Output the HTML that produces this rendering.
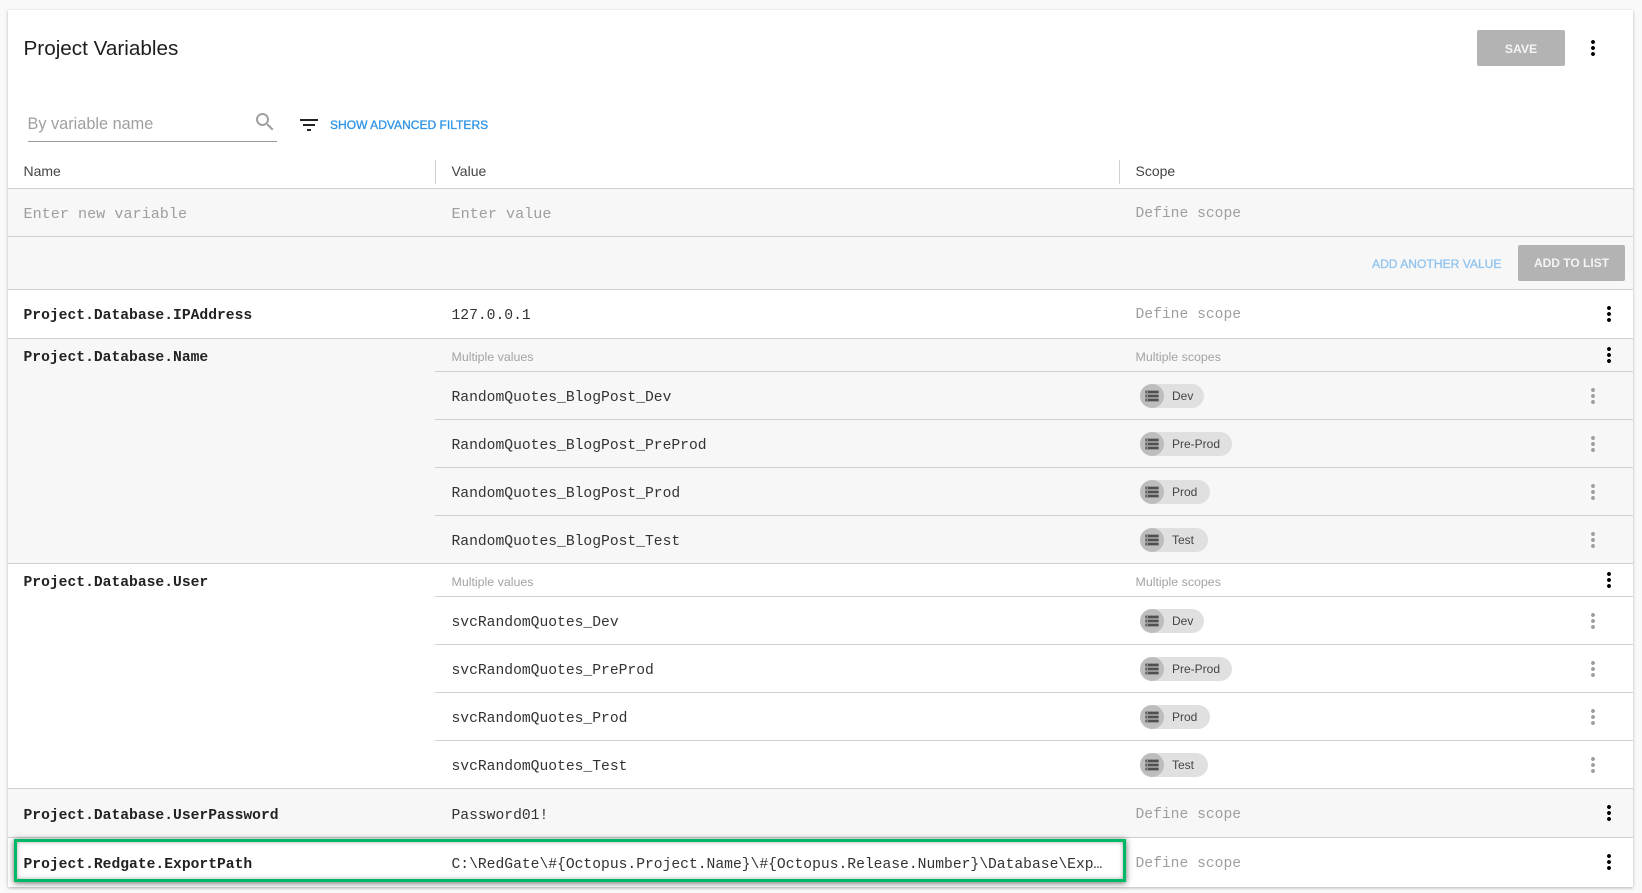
<!DOCTYPE html>
<html><head><meta charset="utf-8"><title>Project Variables</title>
<style>
html,body{margin:0;padding:0;width:1642px;height:893px;overflow:hidden;background:#f9f9f9}
body{position:relative;font-family:"Liberation Sans",sans-serif}
.card{position:absolute;left:8px;top:10px;width:1625px;height:877px;background:#fff;box-shadow:0 1px 3px rgba(0,0,0,.28)}
.a{position:absolute;white-space:nowrap}
.bg{position:absolute;left:8px;width:1625px;background:#f7f7f7}
.h{position:absolute;height:1px;background:#d0d0d0}
.m{position:absolute;white-space:pre;font-family:"Liberation Mono",monospace;font-size:14.67px;line-height:20px;color:#333;margin-top:2px;margin-left:-.5px}
.n{font-weight:bold;left:24px;color:#222}
.v{left:452px}
.p{color:#9e9e9e;font-size:15.15px}
.s{left:1136px;color:#9e9e9e}
.mv{position:absolute;font-size:12.4px;line-height:16px;color:#a3a3a3;white-space:nowrap;margin-left:-.5px}
.chip{position:absolute;left:1140px;height:24px;border-radius:12px;background:#e0e0e0;font-size:12px;line-height:24px;color:#444}
.chip i{position:absolute;left:0;top:0;width:24px;height:24px;border-radius:50%;background:#bdbdbd}
.chip svg{position:absolute;left:4px;top:4px;width:16px;height:16px;fill:#505050}
.chip span{position:absolute;left:32px;top:0;white-space:nowrap}
.d{position:absolute;width:24px;height:24px;fill:#000}
.d.g{fill:#9e9e9e}
</style></head><body>
<div class="card"></div>

<div class="a" style="left:23.5px;top:37px;font-size:20.7px;line-height:24px;color:#1d1d1d">Project Variables</div>
<div class="a" style="left:1477px;top:30px;width:88px;height:36px;background:#b3b3b3;border-radius:2px;color:#f4f4f4;font-size:12.2px;font-weight:bold;line-height:38px;text-align:center">SAVE</div>
<svg class="d" style="left:1581px;top:36px" viewBox="0 0 24 24"><path d="M12 8c1.1 0 2-.9 2-2s-.9-2-2-2-2 .9-2 2 .9 2 2 2zm0 2c-1.100 0-2 .9-2 2s.9 2 2 2 2-.9 2-2-.9-2-2-2zm0 6c-1.100 0-2 .9-2 2s.9 2 2 2 2-.9 2-2-.9-2-2-2z"/></svg>

<div class="a" style="left:27.5px;top:114px;font-size:16.3px;line-height:20px;color:#a0a0a0">By variable name</div>
<svg style="position:absolute;left:253px;top:110px;width:24px;height:24px;fill:#9e9e9e" viewBox="0 0 24 24"><path d="M15.500 14h-.79l-.28-.27C15.410 12.590 16 11.110 16 9.500 16 5.910 13.090 3 9.500 3S3 5.910 3 9.500 5.910 16 9.500 16c1.610 0 3.090-.59 4.230-1.570l.27.28v.79l5 4.990L20.490 19l-4.990-5zm-6 0C7.010 14 5 11.990 5 9.500S7.010 5 9.500 5 14 7.010 14 9.500 11.990 14 9.500 14z"/></svg>
<div class="h" style="left:28px;top:141px;width:249px;background:#9a9a9a"></div>
<svg style="position:absolute;left:297px;top:113px;width:24px;height:24px;fill:#222" viewBox="0 0 24 24"><path d="M10 18h4v-2h-4v2zM3 6v2h18V6H3zm3 7h12v-2H6v2z"/></svg>
<div class="a" style="left:330px;top:117px;font-size:12.05px;line-height:16px;font-weight:normal;color:#2f93e6;-webkit-text-stroke:.3px #2f93e6">SHOW ADVANCED FILTERS</div>

<div class="a" style="left:23.5px;top:163px;font-size:14px;line-height:16px;color:#444">Name</div>
<div class="a" style="left:451.5px;top:163px;font-size:14px;line-height:16px;color:#444">Value</div>
<div class="a" style="left:1135.5px;top:163px;font-size:14px;line-height:16px;color:#444">Scope</div>
<div class="a" style="left:435px;top:160px;width:1px;height:24px;background:#d0d0d0"></div>
<div class="a" style="left:1119px;top:160px;width:1px;height:24px;background:#d0d0d0"></div>

<div class="bg" style="top:189px;height:100px"></div>
<div class="bg" style="top:339px;height:224px"></div>
<div class="bg" style="top:789px;height:48px"></div>

<div class="h" style="left:8px;width:1625px;top:188px"></div>
<div class="h" style="left:8px;width:1625px;top:236px"></div>
<div class="h" style="left:8px;width:1625px;top:289px"></div>
<div class="h" style="left:8px;width:1625px;top:338px"></div>
<div class="h" style="left:435px;width:1198px;top:371px"></div>
<div class="h" style="left:435px;width:1198px;top:419px"></div>
<div class="h" style="left:435px;width:1198px;top:467px"></div>
<div class="h" style="left:435px;width:1198px;top:515px"></div>
<div class="h" style="left:8px;width:1625px;top:563px"></div>
<div class="h" style="left:435px;width:1198px;top:596px"></div>
<div class="h" style="left:435px;width:1198px;top:644px"></div>
<div class="h" style="left:435px;width:1198px;top:692px"></div>
<div class="h" style="left:435px;width:1198px;top:740px"></div>
<div class="h" style="left:8px;width:1625px;top:788px"></div>
<div class="h" style="left:8px;width:1625px;top:837px"></div>

<div class="m p" style="left:24px;top:202px">Enter new variable</div>
<div class="m p" style="left:452px;top:202px">Enter value</div>
<div class="m s" style="top:202px">Define scope</div>
<div class="a" style="left:1372px;top:256px;font-size:12.1px;line-height:16px;color:#8fc3ee;-webkit-text-stroke:.3px #8fc3ee">ADD ANOTHER VALUE</div>
<div class="a" style="left:1518px;top:245px;width:107px;height:36px;background:#b3b3b3;border-radius:2px;color:#f4f4f4;font-size:12px;font-weight:bold;line-height:37px;text-align:center">ADD TO LIST</div>

<div class="m n" style="top:304px">Project.Database.IPAddress</div>
<div class="m v" style="top:304px">127.0.0.1</div>
<div class="m s" style="top:303px">Define scope</div>
<svg class="d" style="left:1597px;top:302px" viewBox="0 0 24 24"><path d="M12 8c1.100 0 2-.9 2-2s-.9-2-2-2-2 .9-2 2 .9 2 2 2zm0 2c-1.100 0-2 .9-2 2s.9 2 2 2 2-.9 2-2-.9-2-2-2zm0 6c-1.100 0-2 .9-2 2s.9 2 2 2 2-.9 2-2-.9-2-2-2z"/></svg>

<div class="m n" style="top:346px">Project.Database.Name</div>
<div class="mv" style="left:452px;top:349px">Multiple values</div>
<div class="mv" style="left:1136px;top:349px">Multiple scopes</div>
<svg class="d" style="left:1597px;top:343px" viewBox="0 0 24 24"><path d="M12 8c1.100 0 2-.9 2-2s-.9-2-2-2-2 .9-2 2 .9 2 2 2zm0 2c-1.100 0-2 .9-2 2s.9 2 2 2 2-.9 2-2-.9-2-2-2zm0 6c-1.100 0-2 .9-2 2s.9 2 2 2 2-.9 2-2-.9-2-2-2z"/></svg>

<div class="m v" style="top:386px">RandomQuotes_BlogPost_Dev</div>
<div class="m v" style="top:434px">RandomQuotes_BlogPost_PreProd</div>
<div class="m v" style="top:482px">RandomQuotes_BlogPost_Prod</div>
<div class="m v" style="top:530px">RandomQuotes_BlogPost_Test</div>

<div class="chip" style="top:384px;width:64px"><i></i><svg viewBox="0 0 24 24"><path d="M2 20h20v-4H2v4zm2-3h2v2H4v-2zM2 4v4h20V4H2zm4 3H4V5h2v2zm-4 7h20v-4H2v4zm2-3h2v2H4v-2z"/></svg><span>Dev</span></div>
<div class="chip" style="top:432px;width:92px"><i></i><svg viewBox="0 0 24 24"><path d="M2 20h20v-4H2v4zm2-3h2v2H4v-2zM2 4v4h20V4H2zm4 3H4V5h2v2zm-4 7h20v-4H2v4zm2-3h2v2H4v-2z"/></svg><span>Pre-Prod</span></div>
<div class="chip" style="top:480px;width:70px"><i></i><svg viewBox="0 0 24 24"><path d="M2 20h20v-4H2v4zm2-3h2v2H4v-2zM2 4v4h20V4H2zm4 3H4V5h2v2zm-4 7h20v-4H2v4zm2-3h2v2H4v-2z"/></svg><span>Prod</span></div>
<div class="chip" style="top:528px;width:68px"><i></i><svg viewBox="0 0 24 24"><path d="M2 20h20v-4H2v4zm2-3h2v2H4v-2zM2 4v4h20V4H2zm4 3H4V5h2v2zm-4 7h20v-4H2v4zm2-3h2v2H4v-2z"/></svg><span>Test</span></div>

<svg class="d g" style="left:1581px;top:384px" viewBox="0 0 24 24"><path d="M12 8c1.100 0 2-.9 2-2s-.9-2-2-2-2 .9-2 2 .9 2 2 2zm0 2c-1.100 0-2 .9-2 2s.9 2 2 2 2-.9 2-2-.9-2-2-2zm0 6c-1.100 0-2 .9-2 2s.9 2 2 2 2-.9 2-2-.9-2-2-2z"/></svg>
<svg class="d g" style="left:1581px;top:432px" viewBox="0 0 24 24"><path d="M12 8c1.100 0 2-.9 2-2s-.9-2-2-2-2 .9-2 2 .9 2 2 2zm0 2c-1.100 0-2 .9-2 2s.9 2 2 2 2-.9 2-2-.9-2-2-2zm0 6c-1.100 0-2 .9-2 2s.9 2 2 2 2-.9 2-2-.9-2-2-2z"/></svg>
<svg class="d g" style="left:1581px;top:480px" viewBox="0 0 24 24"><path d="M12 8c1.100 0 2-.9 2-2s-.9-2-2-2-2 .9-2 2 .9 2 2 2zm0 2c-1.100 0-2 .9-2 2s.9 2 2 2 2-.9 2-2-.9-2-2-2zm0 6c-1.100 0-2 .9-2 2s.9 2 2 2 2-.9 2-2-.9-2-2-2z"/></svg>
<svg class="d g" style="left:1581px;top:528px" viewBox="0 0 24 24"><path d="M12 8c1.100 0 2-.9 2-2s-.9-2-2-2-2 .9-2 2 .9 2 2 2zm0 2c-1.100 0-2 .9-2 2s.9 2 2 2 2-.9 2-2-.9-2-2-2zm0 6c-1.100 0-2 .9-2 2s.9 2 2 2 2-.9 2-2-.9-2-2-2z"/></svg>

<div class="m n" style="top:571px">Project.Database.User</div>
<div class="mv" style="left:452px;top:574px">Multiple values</div>
<div class="mv" style="left:1136px;top:574px">Multiple scopes</div>
<svg class="d" style="left:1597px;top:568px" viewBox="0 0 24 24"><path d="M12 8c1.100 0 2-.9 2-2s-.9-2-2-2-2 .9-2 2 .9 2 2 2zm0 2c-1.100 0-2 .9-2 2s.9 2 2 2 2-.9 2-2-.9-2-2-2zm0 6c-1.100 0-2 .9-2 2s.9 2 2 2 2-.9 2-2-.9-2-2-2z"/></svg>

<div class="m v" style="top:611px">svcRandomQuotes_Dev</div>
<div class="m v" style="top:659px">svcRandomQuotes_PreProd</div>
<div class="m v" style="top:707px">svcRandomQuotes_Prod</div>
<div class="m v" style="top:755px">svcRandomQuotes_Test</div>

<div class="chip" style="top:609px;width:64px"><i></i><svg viewBox="0 0 24 24"><path d="M2 20h20v-4H2v4zm2-3h2v2H4v-2zM2 4v4h20V4H2zm4 3H4V5h2v2zm-4 7h20v-4H2v4zm2-3h2v2H4v-2z"/></svg><span>Dev</span></div>
<div class="chip" style="top:657px;width:92px"><i></i><svg viewBox="0 0 24 24"><path d="M2 20h20v-4H2v4zm2-3h2v2H4v-2zM2 4v4h20V4H2zm4 3H4V5h2v2zm-4 7h20v-4H2v4zm2-3h2v2H4v-2z"/></svg><span>Pre-Prod</span></div>
<div class="chip" style="top:705px;width:70px"><i></i><svg viewBox="0 0 24 24"><path d="M2 20h20v-4H2v4zm2-3h2v2H4v-2zM2 4v4h20V4H2zm4 3H4V5h2v2zm-4 7h20v-4H2v4zm2-3h2v2H4v-2z"/></svg><span>Prod</span></div>
<div class="chip" style="top:753px;width:68px"><i></i><svg viewBox="0 0 24 24"><path d="M2 20h20v-4H2v4zm2-3h2v2H4v-2zM2 4v4h20V4H2zm4 3H4V5h2v2zm-4 7h20v-4H2v4zm2-3h2v2H4v-2z"/></svg><span>Test</span></div>

<svg class="d g" style="left:1581px;top:609px" viewBox="0 0 24 24"><path d="M12 8c1.100 0 2-.9 2-2s-.9-2-2-2-2 .9-2 2 .9 2 2 2zm0 2c-1.100 0-2 .9-2 2s.9 2 2 2 2-.9 2-2-.9-2-2-2zm0 6c-1.100 0-2 .9-2 2s.9 2 2 2 2-.9 2-2-.9-2-2-2z"/></svg>
<svg class="d g" style="left:1581px;top:657px" viewBox="0 0 24 24"><path d="M12 8c1.100 0 2-.9 2-2s-.9-2-2-2-2 .9-2 2 .9 2 2 2zm0 2c-1.100 0-2 .9-2 2s.9 2 2 2 2-.9 2-2-.9-2-2-2zm0 6c-1.100 0-2 .9-2 2s.9 2 2 2 2-.9 2-2-.9-2-2-2z"/></svg>
<svg class="d g" style="left:1581px;top:705px" viewBox="0 0 24 24"><path d="M12 8c1.100 0 2-.9 2-2s-.9-2-2-2-2 .9-2 2 .9 2 2 2zm0 2c-1.100 0-2 .9-2 2s.9 2 2 2 2-.9 2-2-.9-2-2-2zm0 6c-1.100 0-2 .9-2 2s.9 2 2 2 2-.9 2-2-.9-2-2-2z"/></svg>
<svg class="d g" style="left:1581px;top:753px" viewBox="0 0 24 24"><path d="M12 8c1.100 0 2-.9 2-2s-.9-2-2-2-2 .9-2 2 .9 2 2 2zm0 2c-1.100 0-2 .9-2 2s.9 2 2 2 2-.9 2-2-.9-2-2-2zm0 6c-1.100 0-2 .9-2 2s.9 2 2 2 2-.9 2-2-.9-2-2-2z"/></svg>

<div class="m n" style="top:804px">Project.Database.UserPassword</div>
<div class="m v" style="top:804px">Password01!</div>
<div class="m s" style="top:803px">Define scope</div>
<svg class="d" style="left:1597px;top:801px" viewBox="0 0 24 24"><path d="M12 8c1.100 0 2-.9 2-2s-.9-2-2-2-2 .9-2 2 .9 2 2 2zm0 2c-1.100 0-2 .9-2 2s.9 2 2 2 2-.9 2-2-.9-2-2-2zm0 6c-1.100 0-2 .9-2 2s.9 2 2 2 2-.9 2-2-.9-2-2-2z"/></svg>

<div class="a" style="left:14px;top:839px;width:1106px;height:37px;border:3px solid #00b964;box-shadow:0 1px 6px rgba(0,0,0,.6),inset 0 0 4px rgba(0,0,0,.35)"></div>
<div class="m n" style="top:853px">Project.Redgate.ExportPath</div>
<div class="m v" style="top:853px">C:\RedGate\#{Octopus.Project.Name}\#{Octopus.Release.Number}\Database\Exp…</div>
<div class="m s" style="top:852px">Define scope</div>
<svg class="d" style="left:1597px;top:850px" viewBox="0 0 24 24"><path d="M12 8c1.100 0 2-.9 2-2s-.9-2-2-2-2 .9-2 2 .9 2 2 2zm0 2c-1.100 0-2 .9-2 2s.9 2 2 2 2-.9 2-2-.9-2-2-2zm0 6c-1.100 0-2 .9-2 2s.9 2 2 2 2-.9 2-2-.9-2-2-2z"/></svg>
</body></html>
